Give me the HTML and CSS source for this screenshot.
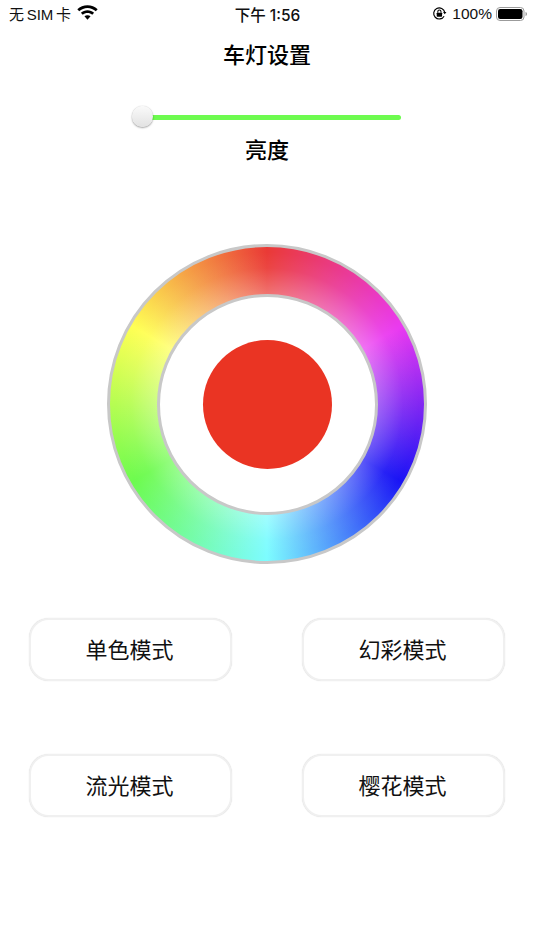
FILE: index.html
```html
<!DOCTYPE html>
<html lang="zh-CN">
<head>
<meta charset="utf-8">
<title>车灯设置</title>
<link rel="stylesheet" href="styles.css">
</head>
<body>
<div class="page">
  <header class="status">
    <div class="status-left">
      <span>无 SIM 卡</span>
      <svg class="wifi" width="21" height="15" viewBox="0 0 20 14.300" aria-hidden="true">
        <path d="M10 .2c3.700 0 7.100 1.400 9.700 3.800l-1.800 1.900C15.800 4 13 2.800 10 2.800S4.200 4 2.100 5.900L.3 4C2.900 1.600 6.300.2 10 .2z"/>
        <path d="M10 5c2.400 0 4.600.9 6.300 2.400l-1.800 1.900c-1.200-1.100-2.800-1.700-4.500-1.700s-3.300.6-4.500 1.700L3.700 7.400C5.400 5.900 7.600 5 10 5z"/>
        <path d="M10 9.800c1.100 0 2.100.4 2.900 1L10 14l-2.900-3.200c.8-.6 1.800-1 2.900-1z"/>
      </svg>
    </div>
    <div class="status-time">下午 1:56</div>
    <div class="status-right">
      <svg class="lock" width="15" height="15" viewBox="0 0 14 14" aria-hidden="true">
        <path d="M11.300 9.500A5.200 5.200 0 1 1 11.900 6" fill="none" stroke="#000" stroke-width="1.100"/>
        <path d="M10.300 5.600h3.200l-1.600 2.100z"/>
        <rect x="4.400" y="6.200" width="5" height="3.800" rx=".6"/>
        <path d="M5.400 6.300V5.300a1.500 1.500 0 0 1 3 0v1" fill="none" stroke="#000" stroke-width="1"/>
      </svg>
      <span>100%</span>
      <svg class="battery" width="32" height="14" viewBox="0 0 32 14" aria-hidden="true">
        <rect x=".5" y=".5" width="27.500" height="13" rx="3.500" fill="none" stroke="#9b9b9b"/>
        <rect x="2" y="2" width="24.500" height="10" rx="2.200" fill="#000"/>
        <path d="M29.500 5c1 .3 1.500 1 1.500 2s-.5 1.700-1.500 2z" fill="#9b9b9b"/>
      </svg>
    </div>
  </header>

  <h1 class="title">车灯设置</h1>

  <div class="slider">
    <div class="slider-track"></div>
    <div class="slider-thumb"></div>
  </div>
  <div class="slider-label">亮度</div>

  <div class="wheel-wrap">
    <div class="wheel">
      <div class="wheel-hole">
        <div class="swatch"></div>
      </div>
    </div>
  </div>

  <div class="modes">
    <button class="mode" type="button">单色模式</button>
    <button class="mode" type="button">幻彩模式</button>
    <button class="mode" type="button">流光模式</button>
    <button class="mode" type="button">樱花模式</button>
  </div>
</div>
</body>
</html>
```

FILE: styles.css
```css
* { box-sizing: border-box; }
html, body { margin: 0; padding: 0; background: #fff; }
body {
  width: 534px;
  height: 950px;
  overflow: hidden;
  color: #000;
  font-family: "Liberation Sans", "Noto Sans CJK SC", sans-serif;
}
.page { display: flex; flex-direction: column; height: 950px; }

.status {
  display: grid;
  grid-template-columns: 1fr auto 1fr;
  align-items: center;
  height: 27px;
  padding: 0 6px 0 9px;
  font-size: 15px;
  color: #111;
}
.status-left { display: flex; align-items: center; gap: 6px; }
.status-left span { font-size: 15px; word-spacing: -1.500px; }
.wifi { margin-top: -3px; }
.status-time { font-family: "Inter", "Noto Sans CJK SC", sans-serif; font-size: 15.500px; font-weight: 500; margin-left: -2px; }
.status-right { display: flex; align-items: center; justify-content: flex-end; gap: 4px; font-size: 15.500px; }
.lock { margin-right: 1px; }

.title {
  margin: 14px 0 0;
  height: 30px;
  line-height: 30px;
  text-align: center;
  font-size: 22px;
  font-weight: 500;
}

.slider {
  position: relative;
  display: flex;
  align-items: center;
  width: 270px;
  height: 24px;
  margin: 34px 0 0 131px;
}
.slider-track {
  flex: 1;
  height: 5px;
  margin-left: 10px;
  border-radius: 3px;
  background: #6dfb4f;
}
.slider-thumb {
  position: absolute;
  left: 1px;
  top: 1px;
  width: 21px;
  height: 21px;
  border-radius: 50%;
  background: linear-gradient(#fafafa, #e2e2e2);
  box-shadow: 0 1px 2px rgba(0, 0, 0, .35), 0 0 1px rgba(0, 0, 0, .25);
}
.slider-label {
  margin-top: 7px;
  height: 30px;
  line-height: 30px;
  text-align: center;
  font-size: 22px;
  font-weight: 500;
}

.wheel-wrap { display: flex; justify-content: center; margin-top: 78px; }
.wheel {
  display: flex;
  align-items: center;
  justify-content: center;
  width: 320px;
  height: 320px;
  border: 3.500px solid #c8c8c8;
  border-radius: 50%;
  background:
    radial-gradient(circle closest-side, rgba(255,255,255,.3) 68%, rgba(255,255,255,.06) 85%, rgba(255,255,255,0) 95%),
    conic-gradient(#ea3a36 0deg, #ea3af0 60deg, #1a14f5 120deg, #7dfcff 180deg, #6dfb4f 240deg, #ffff55 300deg, #ea3a36 360deg);
  background-origin: border-box;
}
.wheel-hole {
  display: flex;
  align-items: center;
  justify-content: center;
  width: 221px;
  height: 221px;
  border: 3.500px solid #c8c8c8;
  border-radius: 50%;
  background: #fff;
}
.swatch { width: 129px; height: 129px; border-radius: 50%; background: #ea3423; }

.modes {
  display: grid;
  grid-template-columns: 203px 203px;
  justify-content: space-between;
  row-gap: 73px;
  margin: 54px 29px 0 29px;
}
.mode {
  height: 63px;
  padding: 0 2px 3px 0;
  border: 2px solid #f0f0f0;
  border-radius: 20px;
  background: #fff;
  color: #111;
  font: 22px "Liberation Sans", "Noto Sans CJK SC", sans-serif;
  box-shadow: 0 0 1px rgba(0, 0, 0, .18);
}
```
